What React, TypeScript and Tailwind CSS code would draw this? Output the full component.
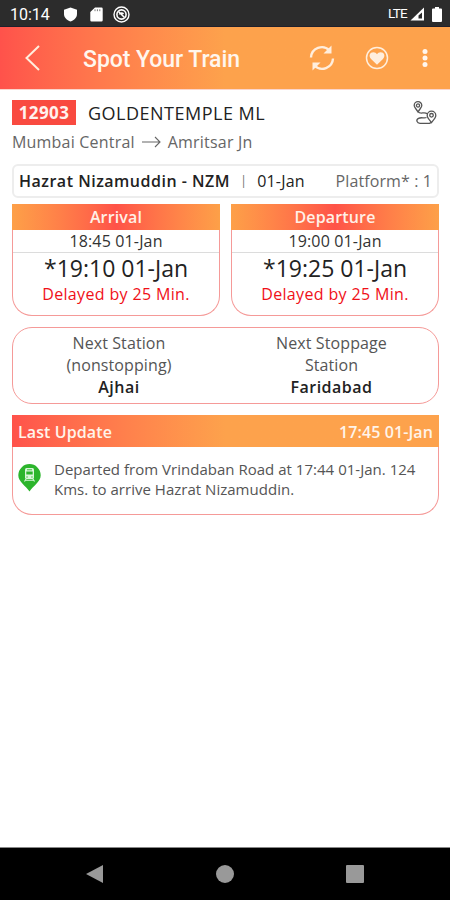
import type { ReactNode } from "react";
import { clsx } from "clsx";

function StatusBar() {
  return (
    <div className="flex h-[27px] shrink-0 items-center border-b border-[#20202c] bg-[#2c2c2c] pl-[10px] pr-[8px] pt-[2px] text-white">
      <span className="w-[53px] pt-px font-[Roboto] text-[16px] leading-none">10:14</span>
      <svg className="h-[15px] w-[15px]" viewBox="0 0 15 15" fill="currentColor">
        <path d="M7.5 0.5 14 2.800V7c0 3.500-2.700 6.300-6.500 7.600C3.700 13.300 1 10.500 1 7V2.800z" />
      </svg>
      <svg className="ml-[12px] h-[15px] w-[13px]" viewBox="0 0 13 15">
        <path d="M5 .5h6.500a1.200 1.200 0 0 1 1.200 1.200v11.600a1.200 1.200 0 0 1-1.200 1.200H1.500A1.200 1.200 0 0 1 .3 13.300V5z" fill="currentColor" />
        <path d="M5 2.300v1.900M7.400 2.300v1.900M9.800 2.300v1.900" stroke="#777" strokeWidth="1" />
      </svg>
      <svg className="ml-[10px] h-[17px] w-[17px]" viewBox="0 0 17 17" fill="none" stroke="currentColor">
        <circle cx="8.500" cy="8.500" r="7.500" strokeWidth="1.400" />
        <circle cx="8.500" cy="8.500" r="4.600" strokeWidth="1.600" />
        <path d="M5.500 5.500l6 6M6.500 8.500c0-2 3-2 4-.5" strokeWidth="1.500" />
      </svg>
      <span className="ml-auto font-[Roboto] text-[13.5px] leading-none tracking-[-0.7px]">LTE</span>
      <svg className="ml-[3px] h-[14px] w-[15px]" viewBox="0 0 15 14">
        <path d="M14 .5V13.500H.5z" fill="currentColor" />
        <path d="M12 5.500V11.500H8.500V8.500z" fill="#2c2c2c" />
      </svg>
      <svg className="ml-[7px] h-[15px] w-[10px]" viewBox="0 0 10 15" fill="currentColor">
        <path d="M3 0h4v1.500h2a1 1 0 0 1 1 1V14a1 1 0 0 1-1 1H1a1 1 0 0 1-1-1V2.500a1 1 0 0 1 1-1h2z" />
      </svg>
    </div>
  );
}

function AppBar() {
  return (
    <header className="flex h-[62px] shrink-0 items-center bg-linear-to-r from-[#ff524b] to-[#fda24c] to-50% pl-[25px] pr-[21px] text-[#ffeedd]">
      <svg className="h-[26px] w-[15px]" viewBox="0 0 15 26" fill="none" stroke="currentColor" strokeWidth="2">
        <path d="M14 1 1.500 13 14 25" />
      </svg>
      <h1 className="ml-[43px] pt-[3px] font-[Roboto] text-[23px] font-medium leading-none tracking-[-0.05px] text-[#fff6ee]">
        Spot Your Train
      </h1>
      <svg className="ml-auto h-[26px] w-[26px]" viewBox="0 0 26 26" fill="none" stroke="currentColor" strokeWidth="2.400">
        <path d="M2 12.500A10.800 10.800 0 0 1 20.500 5.500M24 13.500A10.800 10.800 0 0 1 5.500 20.500" />
        <path d="M22.500 .5V8.500h-8zM3.500 25.500V17.500h8z" fill="currentColor" stroke="none" />
      </svg>
      <svg className="ml-[30px] h-[24px] w-[24px]" viewBox="0 0 24 24">
        <circle cx="12" cy="12" r="10.500" fill="none" stroke="currentColor" strokeWidth="1.500" />
        <path d="M12 18.800 6.300 13.300C3 9.800 5 6.200 8.300 6.200c1.700 0 3 .8 3.700 2 .7-1.200 2-2 3.700-2 3.300 0 5.300 3.600 2 7.100z" fill="currentColor" />
      </svg>
      <svg className="ml-[32px] h-[20px] w-[8px]" viewBox="0 0 8 20" fill="#fff6ee">
        <circle cx="4" cy="3.500" r="2.500" />
        <circle cx="4" cy="10" r="2.500" />
        <circle cx="4" cy="16.500" r="2.500" />
      </svg>
    </header>
  );
}

function RouteIcon() {
  return (
    <svg className="h-[25px] w-[24px]" viewBox="0 0 24 25" fill="none" stroke="#555" strokeWidth="1.300">
      <path d="M5 12C3 8.500 1.200 7.500 1.200 5.500a3.800 3.800 0 0 1 7.600 0C8.800 7.500 7 8.500 5 12z" />
      <circle cx="5" cy="5.500" r="1.600" />
      <path d="M18.500 22.500c-2.500-3-4.300-4.800-4.300-7a4.300 4.300 0 0 1 8.600 0c0 2.200-1.800 4-4.300 7z" />
      <circle cx="18.500" cy="15.300" r="1.800" />
      <path d="M5.500 12c1 2.500 7-.5 8.500 1.800M13.500 17.500c-2 1-5.500-.5-8 .8-3 1.600-1.500 5 1.500 5h9.500l2-1" />
    </svg>
  );
}

type TimeCardProps = {
  title: string;
  scheduled: string;
  actual: string;
  delay: string;
};

function TimeCard({ title, scheduled, actual, delay }: TimeCardProps) {
  return (
    <section className="flex h-[112px] flex-1 flex-col rounded-b-[20px] border border-t-0 border-[#f59a98] text-center">
      <h2 className="-mx-px h-[26px] bg-linear-to-r from-[#fda048] via-[#ff5248] to-[#fda048] text-[16px] font-semibold leading-[26px] tracking-[0.15px] text-[#fff0e6]">
        {title}
      </h2>
      <p className="h-[23px] border-b border-[#dcdcdc] text-[16px] leading-[23px] tracking-[0.15px] text-[#333]">
        {scheduled}
      </p>
      <p className="h-[31px] text-[23px] leading-[31px] text-[#222]">{actual}</p>
      <p className="text-[16px] leading-[20px] tracking-[0.35px] text-[#f01018]">{delay}</p>
    </section>
  );
}

function NextStation({ label, name, className }: { label: ReactNode; name: string; className?: string }) {
  return (
    <div className={clsx("text-center text-[16px] leading-[21.500px] tracking-[0.1px] text-[#555]", className)}>
      <p>{label}</p>
      <p className="pt-px font-semibold tracking-[0.5px] text-[#222]">{name}</p>
    </div>
  );
}

function LastUpdate() {
  return (
    <section className="mt-[11px] h-[100px] rounded-b-[20px] border border-t-0 border-[#f59a98]">
      <div className="-mx-px flex h-[32px] items-center justify-between bg-linear-to-r from-[#ff524b] to-[#fda24c] to-50% px-[6px] pt-px text-[16px] font-semibold text-[#fff4ea]">
        <span className="tracking-[0.1px]">Last Update</span>
        <span className="tracking-[0.1px]">17:45 01-Jan</span>
      </div>
      <div className="flex pl-[5px] pt-[12px]">
        <svg className="mt-[5px] h-[28px] w-[23px] shrink-0" viewBox="0 0 23 28">
          <path d="M11.500 27.500C8 22 .3 18 .3 11.300a11.200 11.200 0 0 1 22.400 0C22.700 18 15 22 11.500 27.500z" fill="#2cb52c" />
          <path d="M8.500 4h6A1.500 1.500 0 0 1 16 5.500v8a1.500 1.500 0 0 1-1.500 1.500h-6A1.500 1.500 0 0 1 7 13.500v-8A1.500 1.500 0 0 1 8.500 4z" fill="#d9f6d9" />
          <path d="M8.300 7.500h6.400v3H8.300z" fill="#2cb52c" />
          <path d="M9 5.800h5M8.300 13h1.500M13.200 13h1.500" stroke="#2cb52c" strokeWidth=".9" />
          <path d="m8 15-1.500 2.500M15 15l1.500 2.500M7.500 16.300h8" stroke="#d9f6d9" strokeWidth="1.100" />
        </svg>
        <p className="ml-[13px] whitespace-nowrap text-[15px] leading-[20px] tracking-[0.020px] text-[#555]">
          Departed from Vrindaban Road at 17:44 01-Jan. 124
          <br />
          Kms. to arrive Hazrat Nizamuddin.
        </p>
      </div>
    </section>
  );
}

function NavigationBar() {
  return (
    <nav className="flex h-[53px] shrink-0 items-center justify-between border-t border-[#888] bg-black px-[86px]">
      <svg className="h-[20px] w-[18px]" viewBox="0 0 18 20" fill="#999">
        <path d="M0 10 17 1v18z" />
      </svg>
      <div className="h-[18px] w-[18px] rounded-full bg-[#999]" />
      <div className="h-[18px] w-[18px] rounded-[1px] bg-[#999]" />
    </nav>
  );
}

export default function App() {
  return (
    <div className="flex h-[900px] w-[450px] flex-col overflow-hidden bg-white font-['Open_Sans',sans-serif]">
      <StatusBar />
      <AppBar />
      <main className="flex-1 border-t border-[#fbd5cc] pl-[12px] pr-[11px] pt-[10px]">
        <div className="flex h-[25px] items-center pr-[2px]">
          <span className="flex h-[25px] w-[64px] items-center justify-center bg-[#f94a40] pt-px text-[17px] font-bold tracking-[0.4px] text-[#fff2ee]">
            12903
          </span>
          <span className="ml-[12px] pt-px text-[18px] leading-none tracking-[0.5px] text-[#222]">GOLDENTEMPLE ML</span>
          <span className="ml-auto">
            <RouteIcon />
          </span>
        </div>
        <div className="mt-[6px] flex h-[22px] items-center text-[16px] tracking-[0.2px] text-[#666]">
          <span>Mumbai Central</span>
          <svg className="ml-[7px] mr-[7px] h-[12px] w-[19px]" viewBox="0 0 19 12" fill="none" stroke="currentColor" strokeWidth="1.100">
            <path d="M0 6h18M13 1l5 5-5 5" />
          </svg>
          <span>Amritsar Jn</span>
        </div>

        <div className="mt-[11px] flex h-[34px] items-center rounded-[6px] border-2 border-[#ededed] px-[5px] text-[16px] text-[#222]">
          <span className="font-semibold tracking-[0.5px]">Hazrat Nizamuddin - NZM</span>
          <span className="ml-[10px] text-[13px] text-[#777]">|</span>
          <span className="ml-[10px] font-medium tracking-[0.2px]">01-Jan</span>
          <span className="ml-auto tracking-[0.1px] text-[#666]">Platform* : 1</span>
        </div>

        <div className="mt-[6px] flex gap-[11px]">
          <TimeCard title="Arrival" scheduled="18:45 01-Jan" actual="*19:10 01-Jan" delay="Delayed by 25 Min." />
          <TimeCard title="Departure" scheduled="19:00 01-Jan" actual="*19:25 01-Jan" delay="Delayed by 25 Min." />
        </div>

        <section className="mt-[11px] flex h-[77px] rounded-[20px] border border-[#f59a98] pt-[5px]">
          <NextStation
            className="w-[212px]"
            label={
              <>
                Next Station
                <br />
                (nonstopping)
              </>
            }
            name="Ajhai"
          />
          <NextStation
            className="flex-1"
            label={
              <>
                Next Stoppage
                <br />
                Station
              </>
            }
            name="Faridabad"
          />
        </section>

        <LastUpdate />
      </main>
      <NavigationBar />
    </div>
  );
}
